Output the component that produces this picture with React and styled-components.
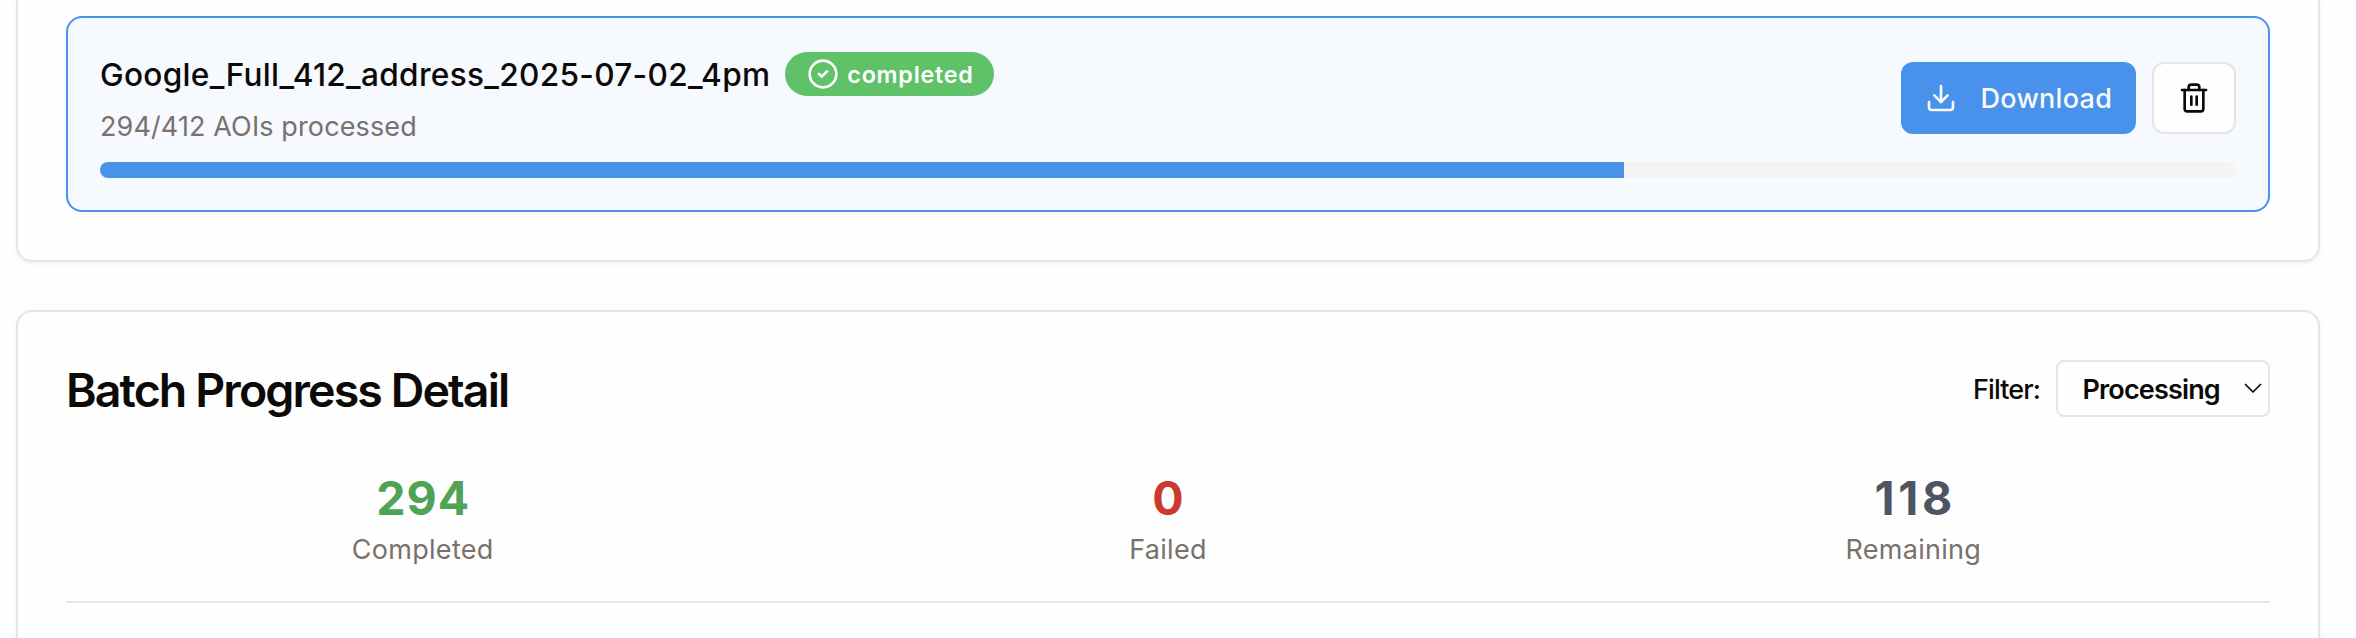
import React from "react";
import styled, { createGlobalStyle } from "styled-components";
import { CircleCheck, Download, Trash2 } from "lucide-react";

const GlobalStyle = createGlobalStyle`
  *, *::before, *::after { box-sizing: border-box; }
  html, body { margin: 0; padding: 0; background: #fefefe; overflow: hidden; }
  body {
    font-family: Inter, "Liberation Sans", sans-serif;
    color: #0c0a09;
    -webkit-font-smoothing: antialiased;
  }
  h2, p { margin: 0; }
`;

const Page = styled.main`
  display: flex;
  flex-direction: column;
  gap: 48px;
  height: 638px;
  padding: 0 36px 0 16px;
  overflow: hidden;
`;

const Card = styled.section`
  flex: none;
  border: 2px solid #e5e5e4;
  border-radius: 16px;
  background: #fefefe;
  box-shadow: 0 2px 4px rgba(0, 0, 0, 0.05);
`;

const JobsCard = styled(Card)`
  border-top: 0;
  border-top-left-radius: 0;
  border-top-right-radius: 0;
  padding: 16px 48px 48px;
`;

const DetailCard = styled(Card)`
  min-height: 400px;
  padding: 48px;
`;

const Job = styled.article`
  border: 2px solid #4892eb;
  border-radius: 16px;
  background: #f6f9fe;
  padding: 32px;
`;

const Row = styled.div`
  display: flex;
  align-items: center;
  justify-content: space-between;
`;

const JobInfo = styled.div`
  display: flex;
  flex-direction: column;
  gap: 8px;
`;

const JobHeading = styled.div`
  display: flex;
  align-items: center;
  gap: 15px;
  height: 48px;
`;

const JobName = styled.span`
  padding-top: 1px;
  font-size: 31.6px;
  line-height: 48px;
  font-weight: 500;
  letter-spacing: 0.3px;
  white-space: nowrap;
`;

const Badge = styled.span`
  display: inline-flex;
  align-items: center;
  gap: 8px;
  width: 209px;
  height: 44px;
  padding-left: 22px;
  border-radius: 22px;
  background: #5fc269;
  color: #fefefe;
  font-size: 23.3px;
  line-height: 32px;
  font-weight: 600;
  letter-spacing: 0.75px;
`;

const Muted = styled.p`
  padding-top: 1px;
  font-size: 27px;
  line-height: 39px;
  letter-spacing: ${(p) => p.$tracking};
  color: #78716c;
`;

const Actions = styled.div`
  display: flex;
  gap: 16px;
`;

const Button = styled.button`
  display: inline-flex;
  align-items: center;
  height: 72px;
  padding: 0 24px;
  border-radius: 12px;
  font: 500 27px/40px Inter, "Liberation Sans", sans-serif;
  letter-spacing: 0.28px;
`;

const DownloadButton = styled(Button)`
  gap: 23.5px;
  width: 235px;
  padding-right: 0;
  border: 0;
  background: #4892eb;
  color: #f8fafc;
`;

const IconButton = styled(Button)`
  border: 2px solid #e5e5e4;
  background: #fefefe;
  color: #0c0a09;
`;

const Label = styled.span`
  padding-top: ${(p) => p.$drop || "1px"};
`;

const Track = styled.div`
  height: 16px;
  margin-top: 16px;
  border-radius: 8px;
  background: #f4f4f2;
  overflow: hidden;
`;

const Fill = styled.div`
  height: 100%;
  background: #4892eb;
`;

const Title = styled.h2`
  padding-top: 3px;
  font-size: 46.5px;
  line-height: 48px;
  font-weight: 600;
  letter-spacing: -1.89px;
`;

const Filter = styled.div`
  display: flex;
  align-items: center;
  gap: 16px;
  font-size: 27px;
  line-height: 40px;
  font-weight: 500;
  letter-spacing: -0.9px;
`;

const Select = styled.div`
  display: flex;
  align-items: center;
  justify-content: space-between;
  width: 214px;
  height: 57px;
  padding: 0 6px 0 24.5px;
  border: 2px solid #e5e5e4;
  border-radius: 8px;
  font-weight: 600;
  letter-spacing: -0.84px;
`;

const Stats = styled.div`
  display: grid;
  grid-template-columns: repeat(3, 1fr);
  gap: 32px;
  margin-top: 48px;
  padding-bottom: 32px;
  border-bottom: 2px solid #e5e5e4;
  text-align: center;
`;

const StatValue = styled.div`
  padding-top: 2px;
  margin-right: -${(p) => p.$tracking};
  font-size: 46.5px;
  line-height: 62px;
  font-weight: 700;
  letter-spacing: ${(p) => p.$tracking};
  color: ${(p) => p.$color};
`;

const STATS = [
  { label: "Completed", value: 294, color: "#4fa256", tracking: "1px" },
  { label: "Failed", value: 0, color: "#cb3a31", tracking: "0px" },
  { label: "Remaining", value: 118, color: "#4d5562", tracking: "3.7px" },
];

export default function App() {
  const done = 294;
  const total = 412;
  return (
    <>
      <GlobalStyle />
      <Page>
        <JobsCard>
          <Job>
            <Row>
              <JobInfo>
                <JobHeading>
                  <JobName>Google_Full_412_address_2025-07-02_4pm</JobName>
                  <Badge>
                    <CircleCheck size={32} />
                    <Label>completed</Label>
                  </Badge>
                </JobHeading>
                <Muted $tracking="0.12px">{`${done}/${total} AOIs processed`}</Muted>
              </JobInfo>
              <Actions>
                <DownloadButton>
                  <Download size={32} />
                  <Label>Download</Label>
                </DownloadButton>
                <IconButton aria-label="Delete">
                  <Trash2 size={32} />
                </IconButton>
              </Actions>
            </Row>
            <Track>
              <Fill style={{ width: `${(done / total) * 100}%` }} />
            </Track>
          </Job>
        </JobsCard>
        <DetailCard>
          <Row>
            <Title>Batch Progress Detail</Title>
            <Filter>
              <Label $drop="2px">Filter:</Label>
              <Select>
                <Label $drop="2px">Processing</Label>
                <svg width="18" height="11" viewBox="0 0 18 11" fill="none" stroke="currentColor" strokeWidth="1.7" strokeLinecap="round" strokeLinejoin="round">
                  <path d="M1.5 1.500 9 9l7.500-7.500" />
                </svg>
              </Select>
            </Filter>
          </Row>
          <Stats>
            {STATS.map((s) => (
              <div key={s.label}>
                <StatValue $color={s.color} $tracking={s.tracking}>{s.value}</StatValue>
                <Muted $tracking="0.3px">{s.label}</Muted>
              </div>
            ))}
          </Stats>
        </DetailCard>
      </Page>
    </>
  );
}
